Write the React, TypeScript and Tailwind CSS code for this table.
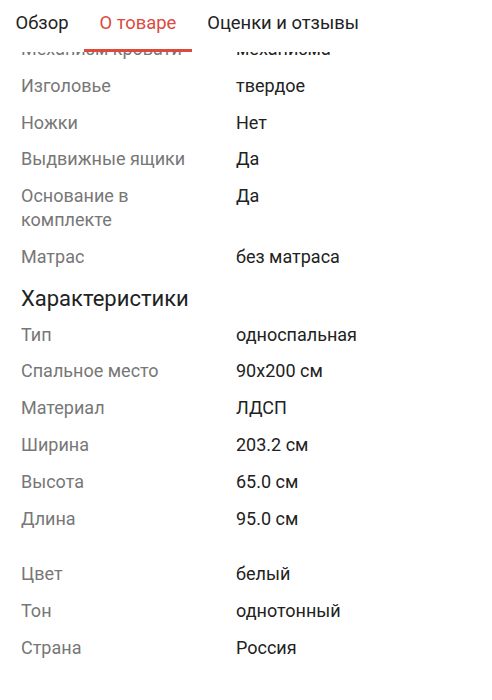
import React from 'react';

type Row = { label: string; value: string };

const topRows: Row[] = [
  { label: 'Механизм кровати', value: 'механизма' },
  { label: 'Изголовье', value: 'твердое' },
  { label: 'Ножки', value: 'Нет' },
  { label: 'Выдвижные ящики', value: 'Да' },
  { label: 'Основание в комплекте', value: 'Да' },
  { label: 'Матрас', value: 'без матраса' },
];

const specRows: Row[] = [
  { label: 'Тип', value: 'односпальная' },
  { label: 'Спальное место', value: '90x200 см' },
  { label: 'Материал', value: 'ЛДСП' },
  { label: 'Ширина', value: '203.2 см' },
  { label: 'Высота', value: '65.0 см' },
  { label: 'Длина', value: '95.0 см' },
];

const extraRows: Row[] = [
  { label: 'Цвет', value: 'белый' },
  { label: 'Тон', value: 'однотонный' },
  { label: 'Страна', value: 'Россия' },
];

const tabs = ['Обзор', 'О товаре', 'Оценки и отзывы'];

const SpecRow: React.FC<{ row: Row }> = ({ row }) => (
  <div className="grid grid-cols-[215px_1fr] py-[6.4px] text-[18px] leading-[24px]">
    <div className="pr-[20px] text-[#777777]">{row.label}</div>
    <div className="text-[#222222]">{row.value}</div>
  </div>
);

export default function App() {
  return (
    <div className="w-[492px] h-[700px] bg-white overflow-hidden font-['Roboto',sans-serif]">
      <div className="relative z-10 h-[52px] bg-white flex">
        {tabs.map((t, i) => (
          <div
            key={t}
            className={`px-[15.5px] pt-[10px] text-[18.4px] leading-[26px] ${
              i === 1 ? 'text-[#dc4a40] border-b-[3px] border-[#e0483c]' : 'text-[#222222]'
            }`}
          >
            {t}
          </div>
        ))}
      </div>
      <div className="-mt-[21.4px] px-[21px]">
        {topRows.map((r) => (
          <SpecRow key={r.label} row={r} />
        ))}
        <div className="pt-[10px] pb-[3px] text-[22px] leading-[28px] text-[#222222]">
          Характеристики
        </div>
        {specRows.map((r) => (
          <SpecRow key={r.label} row={r} />
        ))}
        <div className="h-[19px]" />
        {extraRows.map((r) => (
          <SpecRow key={r.label} row={r} />
        ))}
      </div>
    </div>
  );
}
